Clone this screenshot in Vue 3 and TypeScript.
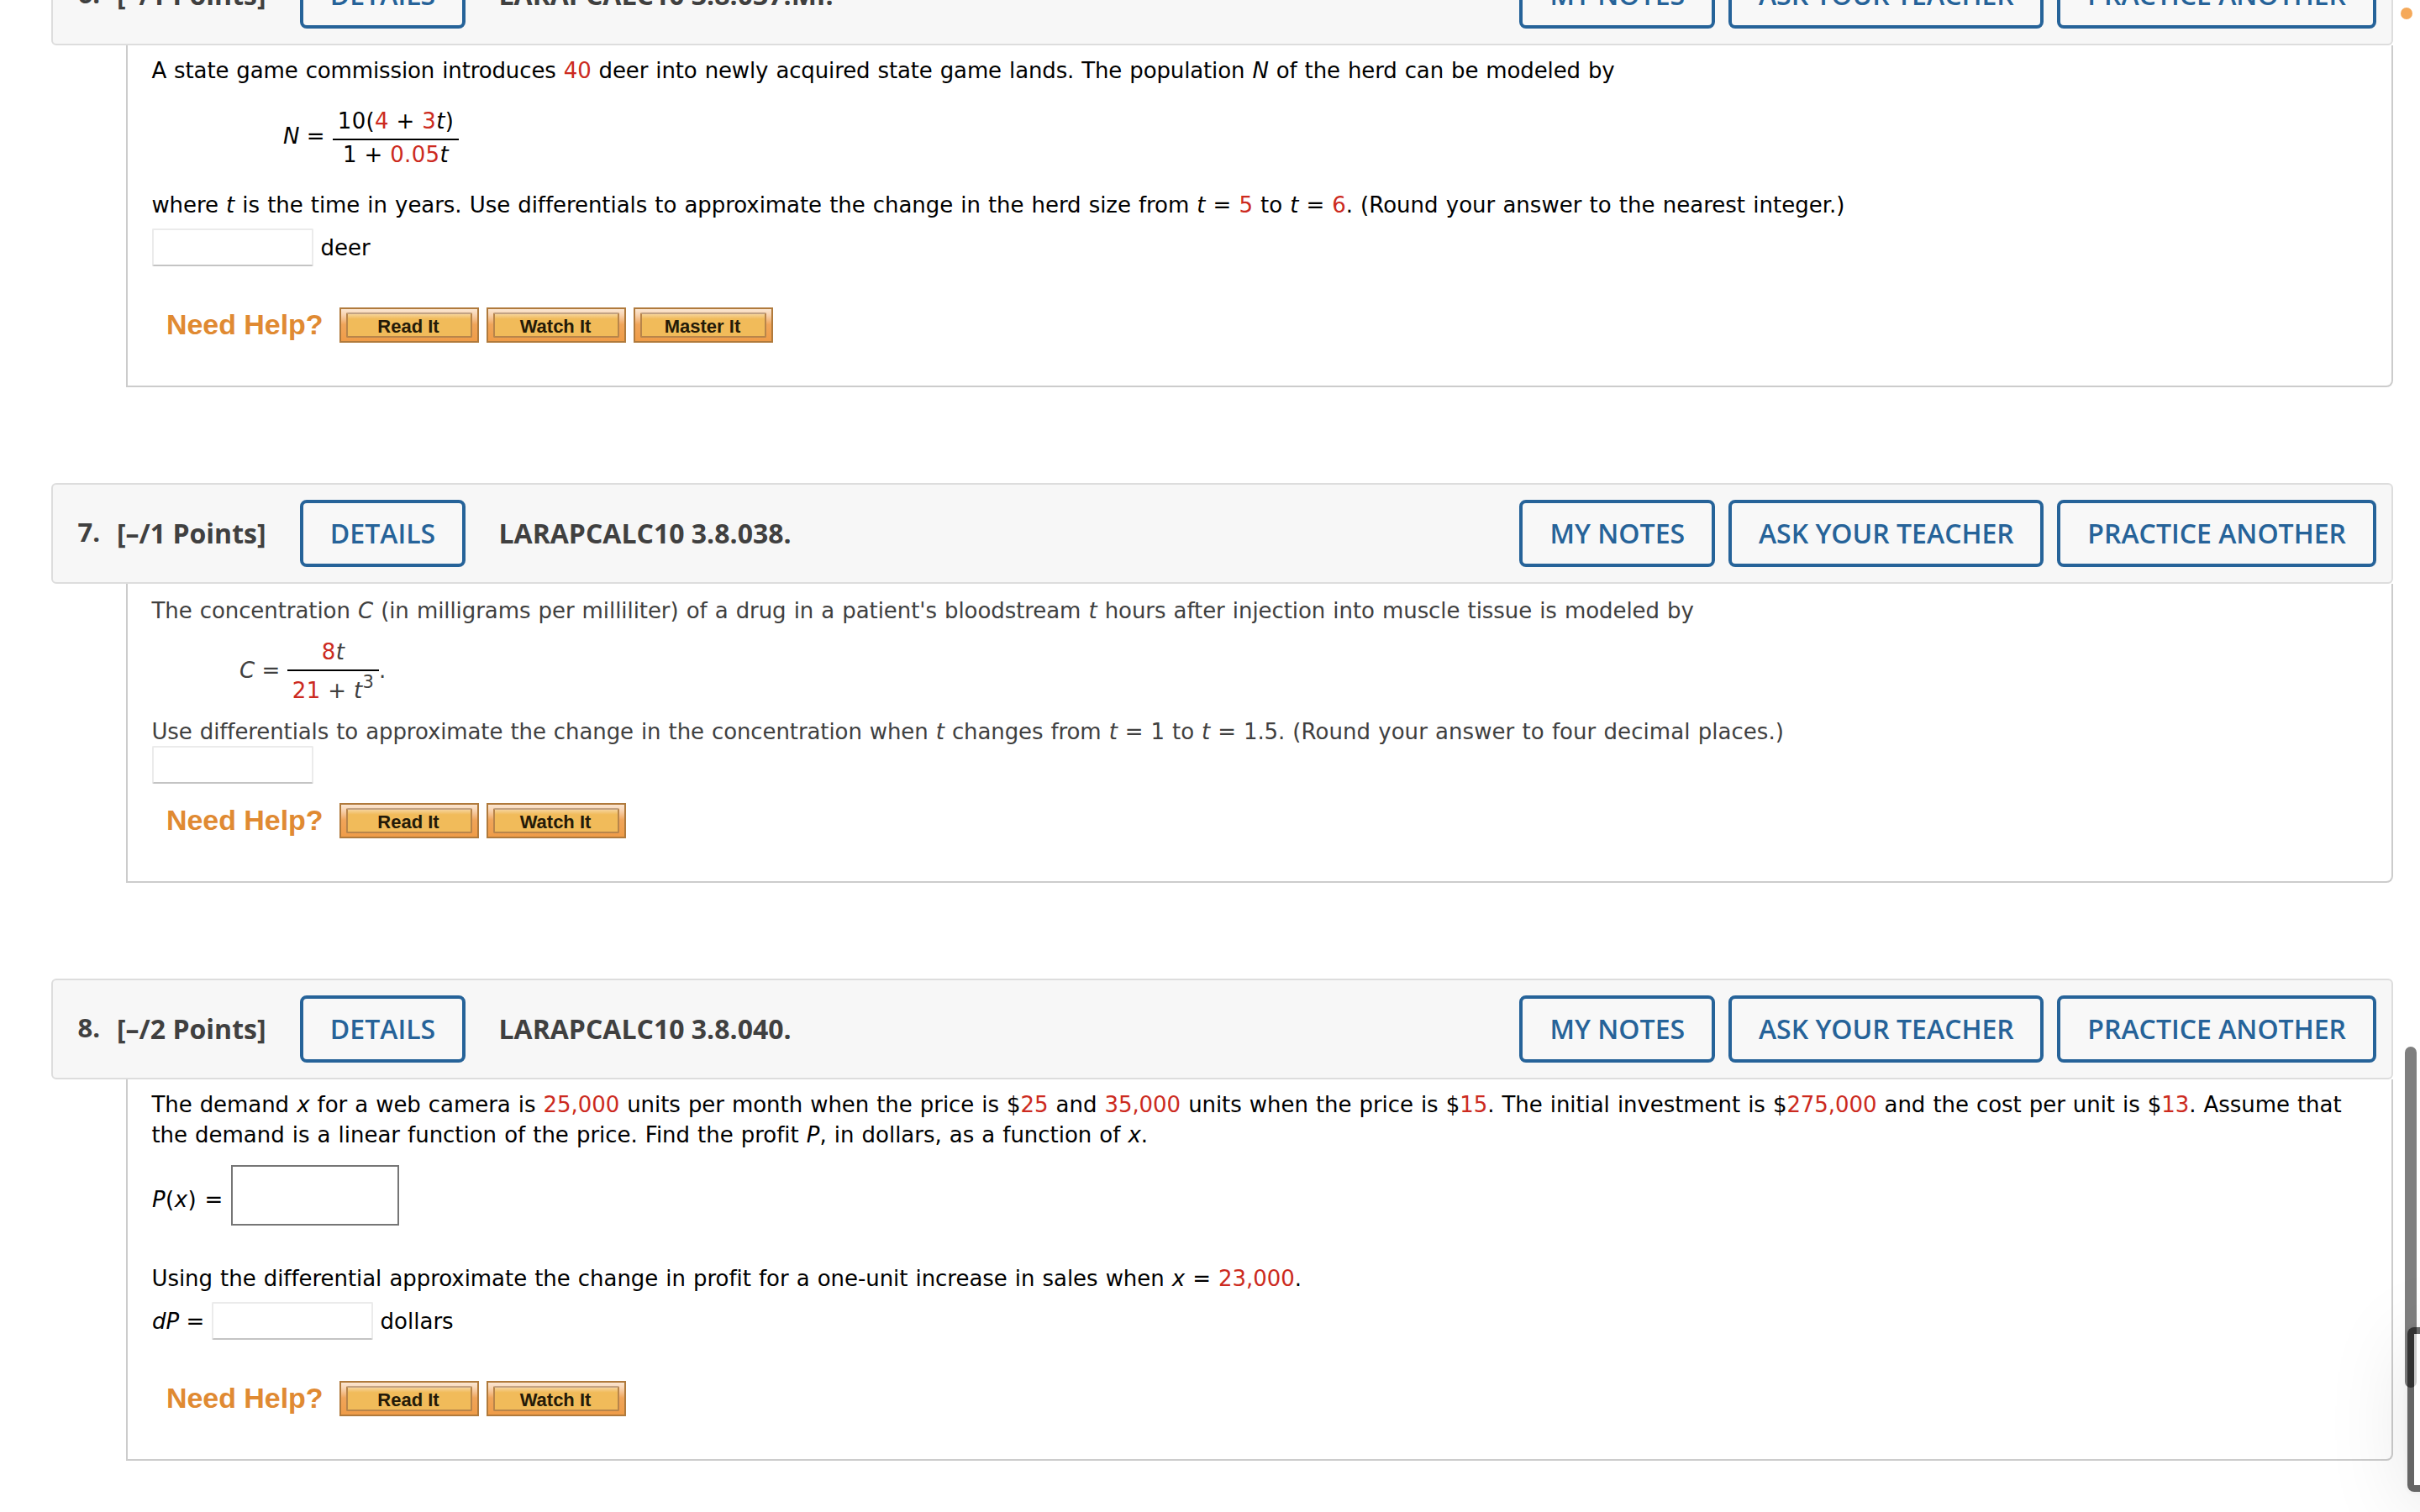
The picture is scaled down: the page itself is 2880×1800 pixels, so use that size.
<script setup lang="ts">
interface Question {
  id: number
  points: number
  code: string
  help: string[]
}

const questions: Question[] = [
  { id: 6, points: 1, code: 'LARAPCALC10 3.8.037.MI.', help: ['Read It', 'Watch It', 'Master It'] },
  { id: 7, points: 1, code: 'LARAPCALC10 3.8.038.', help: ['Read It', 'Watch It'] },
  { id: 8, points: 2, code: 'LARAPCALC10 3.8.040.', help: ['Read It', 'Watch It'] },
]
const actions = ['MY NOTES', 'ASK YOUR TEACHER', 'PRACTICE ANOTHER']
</script>

<template>
  <main class="page">
    <section v-for="q in questions" :key="q.id" class="question" :class="'q' + q.id">
      <header class="bar">
        <span class="num">{{ q.id }}.</span>
        <span class="pts">[–/{{ q.points }} Points]</span>
        <button class="btn details">DETAILS</button>
        <span class="code">{{ q.code }}</span>
        <nav class="actions">
          <button v-for="a in actions" :key="a" class="btn">{{ a }}</button>
        </nav>
      </header>

      <div class="body">
        <template v-if="q.id === 6">
          <p class="line l1">A state game commission introduces <b>40</b> deer into newly acquired state game lands. The population <i>N</i> of the herd can be modeled by</p>
          <div class="formula">
            <span class="lhs"><i>N</i> =</span>
            <span class="frac">
              <span class="top">10(<b>4</b> + <b>3</b><i>t</i>)</span>
              <span class="bottom">1 + <b>0.05</b><i>t</i></span>
            </span>
          </div>
          <p class="line l2">where <i>t</i> is the time in years. Use differentials to approximate the change in the herd size from <i>t</i> = <b>5</b> to <i>t</i> = <b>6</b>. <span class="rounding">(Round your answer to the nearest integer.)</span></p>
          <div class="answer"><input class="field" /><span class="unit">deer</span></div>
        </template>

        <template v-else-if="q.id === 7">
          <p class="line l1">The concentration <i>C</i> (in milligrams per milliliter) of a drug in a patient's bloodstream <i>t</i> hours after injection into muscle tissue is modeled by</p>
          <div class="formula">
            <span class="lhs"><i>C</i> =</span>
            <span class="frac">
              <span class="top"><b>8</b><i>t</i></span>
              <span class="bottom"><b>21</b> + <i>t</i><sup>3</sup></span>
            </span>
            <span class="dot">.</span>
          </div>
          <p class="line l2">Use differentials to approximate the change in the concentration when <i>t</i> changes from <i>t</i> = 1 to <i>t</i> = 1.5. <span class="rounding">(Round your answer to four decimal places.)</span></p>
          <div class="answer"><input class="field" /></div>
        </template>

        <template v-else>
          <p class="line l1">The demand <i>x</i> for a web camera is <b>25,000</b> units per month when the price is $<b>25</b> and <b>35,000</b> units when the price is $<b>15</b>. The initial investment is $<b>275,000</b> and the cost per unit is $<b>13</b>. Assume that</p>
          <p class="line l2">the demand is a linear function of the price. Find the profit <i>P</i>, in dollars, as a function of <i>x</i>.</p>
          <div class="profit"><span><i>P</i>(<i>x</i>) =</span><input class="mathbox" /></div>
          <p class="line l3">Using the differential approximate the change in profit for a one-unit increase in sales when <i>x</i> = <b>23,000</b>.</p>
          <div class="answer"><span class="pre"><i>dP</i> =</span><input class="field" /><span class="unit">dollars</span></div>
        </template>

        <div class="help">
          <span class="need">Need Help?</span>
          <button v-for="h in q.help" :key="h" class="gold"><span>{{ h }}</span></button>
        </div>
      </div>
    </section>

    <i class="notice"></i>
    <i class="scroll"></i>
    <i class="floating"></i>
  </main>
</template>

<style>
html,
body {
  margin: 0;
  overflow: hidden;
  background: #fff;
}
</style>

<style scoped>
* {
  box-sizing: border-box;
}
.page {
  position: relative;
  width: 2880px;
  height: 1800px;
  overflow: hidden;
  background: #fff;
  font: 26px/36px Verdana, 'DejaVu Sans', sans-serif;
  color: #000;
}
.question {
  width: 2787px;
  margin: 0 0 114px 61px;
}
.q6 {
  margin-top: -66px;
}
.bar {
  display: flex;
  align-items: center;
  height: 120px;
  padding: 0 18px 0 29px;
  border: 2px solid #ddd;
  border-radius: 6px;
  background: #f7f7f7;
  font: 700 32px/44px 'Open Sans', sans-serif;
  color: #404040;
  white-space: nowrap;
}
.num {
  width: 47px;
  padding: 0 0 5px 0.5px;
  font-size: 31px;
}
.pts {
  width: 218px;
}
.btn {
  height: 80px;
  padding: 0 32px;
  border: 4px solid #266399;
  border-radius: 8px;
  background: #f8f8f8;
  font: 600 32px/44px 'Open Sans', sans-serif;
  color: #266399;
}
.details {
  width: 197px;
  padding: 0;
  margin-right: 39.5px;
}
.actions {
  display: flex;
  gap: 16px;
  margin-left: auto;
}
.actions .btn:nth-child(1) {
  width: 233px;
  padding: 0;
}
.actions .btn:nth-child(2) {
  width: 375px;
  padding: 0;
}
.body {
  display: flex;
  flex-direction: column;
  margin-left: 89px;
  padding-left: 29px;
  border: solid #ccc;
  border-width: 0 2px 2px 2px;
  border-bottom-right-radius: 8px;
}
.q6 .body {
  height: 407px;
  padding-top: 12px;
}
.q7 .body {
  height: 356px;
  padding-top: 14px;
  color: #404040;
}
.q8 .body {
  height: 454px;
  padding-top: 12px;
}
.line {
  margin: 0 0 0 -0.6px;
  height: 36px;
  word-spacing: 0.9px;
  white-space: nowrap;
}
.q6 .l1 {
  letter-spacing: -0.127px;
}
.q6 .l2 {
  letter-spacing: -0.055px;
}
.q6 .rounding {
  letter-spacing: 0.01px;
}
.q7 .l1 {
  letter-spacing: -0.068px;
}
.q7 .l2 {
  letter-spacing: -0.1px;
}
.q7 .rounding {
  letter-spacing: 0.05px;
}
.q8 .l1 {
  letter-spacing: -0.064px;
}
.q8 .l2 {
  letter-spacing: -0.035px;
}
.q8 .l3 {
  letter-spacing: -0.05px;
}
b {
  font-weight: 400;
  color: #cc2a20;
}
.formula {
  display: flex;
  align-items: flex-start;
  white-space: nowrap;
}
.frac {
  display: flex;
  flex-direction: column;
  align-items: center;
  letter-spacing: 0.35px;
}
.top {
  height: 39px;
}
.bottom {
  border-top: 2px solid #000;
  text-align: center;
}
.q6 .formula {
  height: 124px;
  padding: 24px 0 0 156px;
}
.q6 .lhs {
  width: 59px;
  margin-top: 18px;
}
.q6 .bottom {
  width: 150px;
  line-height: 34px;
}
.q7 .formula {
  height: 108px;
  padding: 13px 0 0 104px;
}
.q7 .lhs,
.dot {
  margin-top: 22px;
}
.q7 .lhs {
  width: 57px;
}
.q7 .bottom {
  width: 109px;
  line-height: 46px;
}
sup {
  position: relative;
  top: -12px;
  font-size: 21px;
  line-height: 0;
  vertical-align: baseline;
}
.answer {
  display: flex;
  align-items: flex-start;
}
.field {
  width: 192px;
  height: 45px;
  padding: 0;
  border: 2px solid #ebebeb;
  border-bottom-color: #c4c4c4;
  border-radius: 2px;
  background: #fff;
}
.unit {
  margin: 5px 0 0 8.6px;
}
.q6 .answer {
  height: 104px;
  padding-top: 10px;
}
.q7 .answer {
  height: 68px;
  margin-top: -1px;
}
.profit {
  display: flex;
  height: 135px;
  padding-top: 18px;
}
.profit span {
  width: 94px;
  margin-top: 23px;
  word-spacing: 0.9px;
  letter-spacing: 0.4px;
}
.mathbox {
  width: 200px;
  height: 72px;
  padding: 0;
  border: 2px solid #767676;
  background: #fff;
}
.q8 .answer {
  height: 104px;
  padding-top: 10px;
}
.pre {
  width: 71px;
  margin-top: 5px;
}
.help {
  display: flex;
  gap: 9px;
  padding-left: 17px;
  white-space: nowrap;
}
.need {
  width: 197px;
  font: 700 34px/40px 'Liberation Sans', Arial, sans-serif;
  letter-spacing: -0.05px;
  color: #e08a32;
}
.gold {
  width: 166px;
  height: 42px;
  padding: 0;
  border: 2px solid #b07a3c;
  background: linear-gradient(#fbe6d2, #f8d3b0 18%, #f0a55a 48%, #ef9c48);
  font: 700 22px/29px 'Liberation Sans', Arial, sans-serif;
  color: #241a08;
}
.gold span {
  display: block;
  height: 30px;
  margin: 0 6px;
  padding-right: 2px;
  border: 2px solid #b8854a;
  border-top-color: #c2a283;
  border-radius: 2px;
  background: linear-gradient(#f6d39a, #f1bb5a 22%);
}
.notice {
  position: absolute;
  left: 2857px;
  top: 9px;
  width: 14px;
  height: 14px;
  border-radius: 50%;
  background: #f5a95a;
}
.scroll {
  position: absolute;
  left: 2862px;
  top: 1246px;
  width: 14px;
  height: 406px;
  border-radius: 7px;
  background: rgba(0, 0, 0, 0.5);
}
.floating {
  position: absolute;
  left: 2865px;
  top: 1580px;
  width: 400px;
  height: 196px;
  border: 8px solid rgba(0, 0, 0, 0.6);
  border-radius: 8px;
  background: rgba(255, 255, 255, 0.6) padding-box;
  box-shadow: 0 16px 100px rgba(0, 0, 0, 0.1), 0 0 6px rgba(0, 0, 0, 0.06);
}
</style>
